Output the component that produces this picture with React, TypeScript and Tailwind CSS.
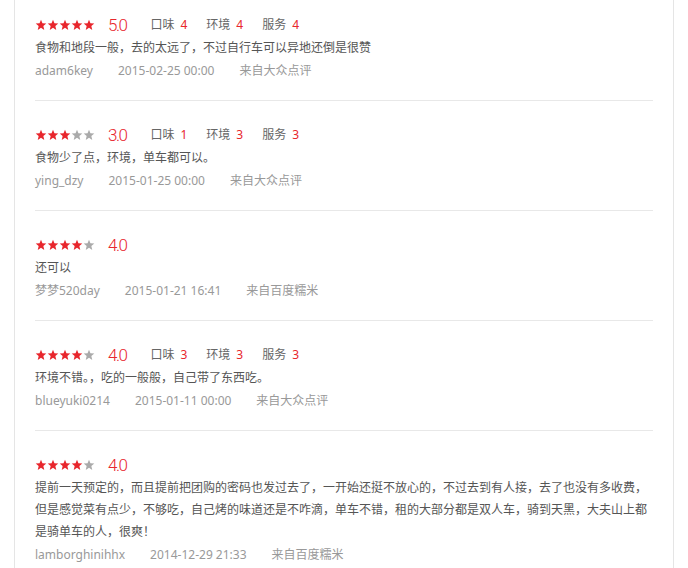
import type { ReactNode } from 'react';

interface Review {
    stars: number;
    score: string;
    sub?: [string, number][];
    text: string;
    user: string;
    date: string;
    source: string;
}

const reviews: Review[] = [
    {
        stars: 5,
        score: '5.0',
        sub: [['口味', 4], ['环境', 4], ['服务', 4]],
        text: '食物和地段一般，去的太远了，不过自行车可以异地还倒是很赞',
        user: 'adam6key',
        date: '2015-02-25 00:00',
        source: '来自大众点评',
    },
    {
        stars: 3,
        score: '3.0',
        sub: [['口味', 1], ['环境', 3], ['服务', 3]],
        text: '食物少了点，环境，单车都可以。',
        user: 'ying_dzy',
        date: '2015-01-25 00:00',
        source: '来自大众点评',
    },
    {
        stars: 4,
        score: '4.0',
        text: '还可以',
        user: '梦梦520day',
        date: '2015-01-21 16:41',
        source: '来自百度糯米',
    },
    {
        stars: 4,
        score: '4.0',
        sub: [['口味', 3], ['环境', 3], ['服务', 3]],
        text: '环境不错。，吃的一般般，自己带了东西吃。',
        user: 'blueyuki0214',
        date: '2015-01-11 00:00',
        source: '来自大众点评',
    },
    {
        stars: 4,
        score: '4.0',
        text: '提前一天预定的，而且提前把团购的密码也发过去了，一开始还挺不放心的，不过去到有人接，去了也没有多收费，\n但是感觉菜有点少，不够吃，自己烤的味道还是不咋滴，单车不错，租的大部分都是双人车，骑到天黑，大夫山上都\n是骑单车的人，很爽！',
        user: 'lamborghinihhx',
        date: '2014-12-29 21:33',
        source: '来自百度糯米',
    },
];

function Star({ on }: { on: boolean }) {
    return (
        <svg width="12" height="12" viewBox="0 0 24 24" className={on ? 'text-[#e8262c]' : 'text-[#aaaaaa]'}>
            <polygon
                fill="currentColor"
                points="12,1.5 14.9,8.6 22.6,9.2 16.7,14.2 18.5,21.8 12,17.7 5.5,21.8 7.3,14.2 1.4,9.2 9.1,8.6"
            />
        </svg>
    );
}

function Meta({ children }: { children: ReactNode }) {
    return <span className="text-[#999999]">{children}</span>;
}

function ReviewItem({ review, first }: { review: Review; first: boolean }) {
    return (
        <div className={`${first ? 'pt-[14px]' : 'pt-[23px]'} pb-[18px] border-b border-[#e8e8e8]`}>
            <div className="flex items-center h-[22px]">
                <div className="flex">
                    {[0, 1, 2, 3, 4].map((i) => (
                        <Star key={i} on={i < review.stars} />
                    ))}
                </div>
                <span className="ml-[13px] text-[17px] font-light tracking-[-1.5px] text-[#e8262c] font-['Roboto',sans-serif] leading-none">
                    {review.score}
                </span>
                {review.sub && (
                    <div className="flex ml-[24px] gap-[19px] text-[12px]">
                        {review.sub.map(([label, val]) => (
                            <span key={label} className="text-[#666666]">
                                {label}
                                <span className="ml-[6px] text-[#e8262c]">{val}</span>
                            </span>
                        ))}
                    </div>
                )}
            </div>
            <p className="mt-[1px] text-[12px] leading-[22px] text-[#555555] whitespace-pre-line">{review.text}</p>
            <div className="mt-[1px] flex gap-[25px] text-[12px] leading-[22px]">
                <Meta>{review.user}</Meta>
                <Meta>{review.date}</Meta>
                <Meta>{review.source}</Meta>
            </div>
        </div>
    );
}

export default function App() {
    return (
        <div className="min-h-screen bg-white font-['Noto_Sans','Noto_Sans_CJK_SC',sans-serif]">
            <div className="ml-[14px] w-[660px] border-x border-[#e5e5e5] px-[20px] pb-[20px]">
                {reviews.map((r, i) => (
                    <ReviewItem key={r.user} review={r} first={i === 0} />
                ))}
            </div>
        </div>
    );
}
